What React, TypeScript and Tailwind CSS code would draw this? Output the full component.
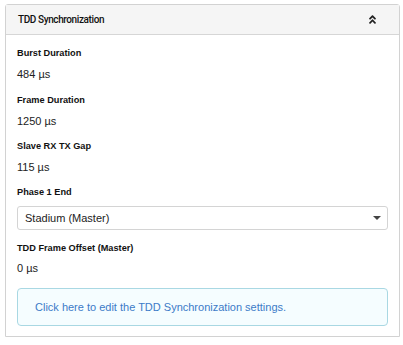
import { FaAngleDoubleUp } from "react-icons/fa";

function Field({ label, value, top }: { label: string; value: string; top: string }) {
  return (
    <div className={top}>
      <div className="text-[9.2px] leading-[12px] font-bold text-[#111]">{label}</div>
      <div className="mt-[8px] text-[11px] leading-[14px] text-[#222]">{value}</div>
    </div>
  );
}

export default function App() {
  return (
    <div className="w-[403px] h-[345px] bg-white pt-[4px] pl-[5px]" style={{ fontFamily: '"Liberation Sans", Arial, sans-serif' }}>
      <div className="w-[395px] border border-[#d2d2d2] rounded-t-[3px]">
        <div className="h-[30px] bg-[#f5f5f5] border-b border-[#d6d6d6] flex items-center justify-between pl-[12px] pr-[22px]">
          <span className="text-[10px] font-medium tracking-[-0.4px] text-[#111]" style={{ fontFamily: 'Roboto, "Liberation Sans", sans-serif' }}>
            TDD Synchronization
          </span>
          <FaAngleDoubleUp className="w-[9px] h-[11px] text-[#222]" />
        </div>
        <div className="px-[11px] pt-[12px] pb-[10px]">
          <Field label="Burst Duration" value="484 µs" top="" />
          <Field label="Frame Duration" value="1250 µs" top="mt-[13px]" />
          <Field label="Slave RX TX Gap" value="115 µs" top="mt-[12px]" />
          <div className="mt-[12px] text-[9.2px] leading-[12px] font-bold text-[#111]">Phase 1 End</div>
          <div className="mt-[8px] h-[24px] border border-[#d4d4d4] rounded-[3px] flex items-center justify-between pl-[7px] pr-[6px]">
            <span className="text-[11px] text-[#222]">Stadium (Master)</span>
            <span className="w-0 h-0 border-l-[4px] border-r-[4px] border-t-[4px] border-l-transparent border-r-transparent border-t-[#444]" />
          </div>
          <div className="mt-[12px] text-[9.2px] leading-[12px] font-bold text-[#111]">TDD Frame Offset (Master)</div>
          <div className="mt-[7px] text-[11px] leading-[14px] text-[#222]">0 µs</div>
          <div className="mt-[13px] h-[38px] border border-[#a9d8e3] bg-[#f5fdff] rounded-[4px] flex items-center pl-[17px]">
            <span className="text-[11px] text-[#3c7bc8]">Click here to edit the TDD Synchronization settings.</span>
          </div>
        </div>
      </div>
    </div>
  );
}
